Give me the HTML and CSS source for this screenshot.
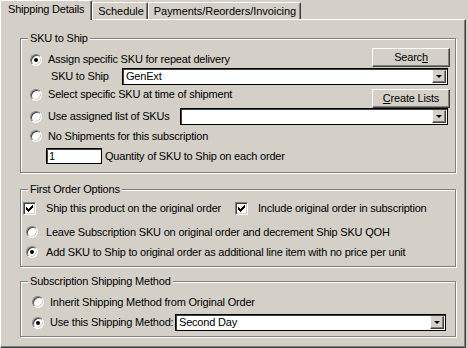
FILE: index.html
```html
<!DOCTYPE html>
<html lang="en">
<head>
<meta charset="utf-8">
<title>Shipping Details</title>
<link rel="stylesheet" href="styles.css">
</head>
<body>
<div class="dialog">
  <div class="tabs">
    <div class="tab tab-active">Shipping Details</div>
    <div class="tab tab-schedule">Schedule</div>
    <div class="tab">Payments/Reorders/Invoicing</div>
  </div>
  <div class="panel">
    <fieldset class="group group-sku">
      <legend>SKU to Ship</legend>
      <div class="group-body body-sku">
        <div class="row row-assign">
          <div class="opt"><span class="radio radio-on"></span>Assign specific SKU for repeat delivery</div>
          <span class="btn">Searc<u>h</u></span>
        </div>
        <div class="row row-sku">
          <span class="field-label">SKU to Ship</span>
          <div class="combo combo-sku"><span class="combo-value">GenExt</span><span class="combo-btn"><span class="tri"></span></span></div>
        </div>
        <div class="row row-select">
          <div class="opt opt-top"><span class="radio"></span>Select specific SKU at time of shipment</div>
          <span class="btn btn-bottom"><u>C</u>reate Lists</span>
        </div>
        <div class="row row-list">
          <div class="opt"><span class="radio"></span>Use assigned list of SKUs</div>
          <div class="combo combo-list"><span class="combo-value"></span><span class="combo-btn"><span class="tri"></span></span></div>
        </div>
        <div class="row row-none">
          <div class="opt"><span class="radio"></span>No Shipments for this subscription</div>
        </div>
        <div class="row row-qty">
          <span class="textbox">1</span>
          <span class="qty-label">Quantity of SKU to Ship on each order</span>
        </div>
      </div>
    </fieldset>

    <fieldset class="group group-first">
      <legend>First Order Options</legend>
      <div class="group-body body-first">
        <div class="row row-checks">
          <div class="chk-opt chk-first"><span class="check"><svg width="7" height="7" viewBox="0 0 7 7"><path d="M0 2h1v1h1v1h1V3h1V2h1V1h1V0h1v3H6v1H5v1H4v1H3v1H2V6H1V5H0z" fill="#000"/></svg></span>Ship this product on the original order</div>
          <div class="chk-opt"><span class="check"><svg width="7" height="7" viewBox="0 0 7 7"><path d="M0 2h1v1h1v1h1V3h1V2h1V1h1V0h1v3H6v1H5v1H4v1H3v1H2V6H1V5H0z" fill="#000"/></svg></span>Include original order in subscription</div>
        </div>
        <div class="row row-leave">
          <div class="opt opt-wide"><span class="radio"></span>Leave Subscription SKU on original order and decrement Ship SKU QOH</div>
        </div>
        <div class="row row-add">
          <div class="opt opt-wide"><span class="radio radio-on"></span>Add SKU to Ship to original order as additional line item with no price per unit</div>
        </div>
      </div>
    </fieldset>

    <fieldset class="group group-method">
      <legend>Subscription Shipping Method</legend>
      <div class="group-body body-method">
        <div class="row row-inherit">
          <div class="opt opt-method"><span class="radio"></span>Inherit Shipping Method from Original Order</div>
        </div>
        <div class="row row-use">
          <div class="opt opt-method"><span class="radio radio-on"></span>Use this Shipping Method:</div>
          <div class="combo combo-method"><span class="combo-value">Second Day</span><span class="combo-btn"><span class="tri"></span></span></div>
        </div>
      </div>
    </fieldset>
  </div>
</div>
</body>
</html>
```

FILE: styles.css
```css
html, body {
  margin: 0;
  padding: 0;
}

body {
  background: #d4d0c8;
  color: #000;
  font-family: "Liberation Sans", Arial, sans-serif;
  font-size: 11px;
  line-height: 13px;
  letter-spacing: -0.2px;
}

.dialog {
  width: 468px;
  height: 348px;
  overflow: hidden;
}

/* ---------- tabs ---------- */
.tabs {
  display: flex;
  align-items: flex-end;
  height: 19px;
}

.tab {
  box-sizing: border-box;
  height: 17px;
  padding: 2px 4px 0 5px;
  border: 1px solid;
  border-color: #fff #404040 transparent #fff;
  border-bottom: 0;
  border-radius: 2px 2px 0 0;
  box-shadow: inset -1px 0 0 #808080;
  white-space: nowrap;
  letter-spacing: -0.05px;
}

.tab-schedule { padding-right: 3px; }

.tab-active {
  position: relative;
  z-index: 1;
  height: 20px;
  margin-bottom: -1px;
  padding: 2px 7px 0 7px;
  background: #d4d0c8;
  letter-spacing: -0.2px;
}

/* ---------- panel ---------- */
.panel {
  box-sizing: border-box;
  width: 466px;
  height: 329px;
  padding: 12px 0 0 19px;
  border: 1px solid;
  border-color: #fff #404040 #404040 #fff;
  box-shadow: inset -1px -1px 0 #808080;
}

/* ---------- group boxes ---------- */
.group {
  box-sizing: border-box;
  width: 436px;
  margin: 0;
  padding: 0;
  border: 1px solid #808080;
  box-shadow: 1px 1px 0 #fff, inset 1px 1px 0 #fff;
  min-width: 0;
}

.group legend {
  margin-left: 7px;
  padding: 0 2px;
  line-height: 13px;
  background: #d4d0c8;
}

.group-first { margin-top: 10px; }
.group-method { margin-top: 8px; }

.body-sku { padding: 3px 5px 8px 9px; }
.body-first { padding: 5px 0 7px 2px; }
.body-method { padding: 7px 9px 5px 10px; }

.row {
  display: flex;
  align-items: center;
}

/* ---------- options ---------- */
.opt {
  display: flex;
  align-items: center;
  gap: 6px;
  white-space: nowrap;
}

.opt-wide { gap: 8px; margin-left: 3px; }
.opt-method { gap: 6px; margin-left: 1px; }

.radio {
  position: relative;
  box-sizing: border-box;
  flex: none;
  width: 12px;
  height: 12px;
  border-radius: 50%;
  border: 1px solid;
  border-color: #808080 #fff #fff #808080;
  background: #fff;
  box-shadow: inset 1px 1px 0 #404040, inset -1px -1px 0 #d4d0c8;
}

.radio-on::after {
  content: "";
  position: absolute;
  left: 3px;
  top: 3px;
  width: 4px;
  height: 4px;
  border-radius: 50%;
  background: #000;
}

.chk-opt {
  display: flex;
  align-items: center;
  gap: 10px;
  white-space: nowrap;
}

.chk-first { width: 212px; }

.check {
  box-sizing: border-box;
  flex: none;
  display: flex;
  align-items: center;
  justify-content: center;
  width: 13px;
  height: 13px;
  border: 1px solid;
  border-color: #808080 #fff #fff #808080;
  background: #fff;
  box-shadow: inset 1px 1px 0 #404040, inset -1px -1px 0 #d4d0c8;
}

.check svg { display: block; }

/* ---------- buttons ---------- */
.btn {
  box-sizing: border-box;
  flex: none;
  display: flex;
  align-items: center;
  justify-content: center;
  width: 78px;
  height: 19px;
  margin-left: auto;
  border: 1px solid;
  border-color: #fff #404040 #404040 #fff;
  box-shadow: inset -1px -1px 0 #808080;
  background: #d4d0c8;
  white-space: nowrap;
}

.btn u { text-decoration: underline; }

/* ---------- combos / text boxes ---------- */
.combo {
  box-sizing: border-box;
  flex: none;
  display: flex;
  height: 17px;
  margin-left: auto;
  border: 1px solid #000;
  box-shadow: inset 1px 1px 0 #404040;
  background: #fff;
  padding: 1px;
}

.combo-value {
  flex: 1;
  padding-left: 2px;
  line-height: 13px;
  white-space: nowrap;
}

.combo-btn {
  box-sizing: border-box;
  flex: none;
  display: flex;
  align-items: center;
  justify-content: center;
  width: 14px;
  height: 13px;
  border: 1px solid;
  border-color: #d4d0c8 #404040 #404040 #fff;
  box-shadow: inset -1px -1px 0 #808080;
  background: #d4d0c8;
}

.tri {
  width: 0;
  height: 0;
  border-left: 3px solid transparent;
  border-right: 3px solid transparent;
  border-top: 3px solid #000;
}

.combo-sku { width: 326px; margin-right: 2px; }
.combo-list { width: 268px; margin-right: 2px; }
.combo-method { width: 271px; }

.row-assign { height: 20px; align-items: flex-start; }
.row-assign .opt { margin-top: 5px; }
.row-sku { height: 17px; }
.field-label { margin-left: 21px; }
.row-select { height: 22px; margin-top: 1px; align-items: flex-start; }
.row-select .opt { margin-top: 2px; }
.row-select .btn { margin-top: 3px; }
.row-list { height: 17px; }
.row-none { height: 16px; margin-top: 3px; }
.row-qty { height: 16px; margin-top: 4px; }

.textbox {
  box-sizing: border-box;
  width: 56px;
  height: 16px;
  margin-left: 16px;
  padding-left: 2px;
  border: 1px solid #000;
  box-shadow: inset 1px 1px 0 #404040;
  background: #fff;
  line-height: 14px;
}

.qty-label { margin-left: 3px; white-space: nowrap; }

.row-checks { height: 14px; }
.row-leave { height: 14px; margin-top: 10px; }
.row-add { height: 14px; margin-top: 6px; }

.row-inherit { height: 14px; }
.row-use { height: 17px; margin-top: 5px; }
```
